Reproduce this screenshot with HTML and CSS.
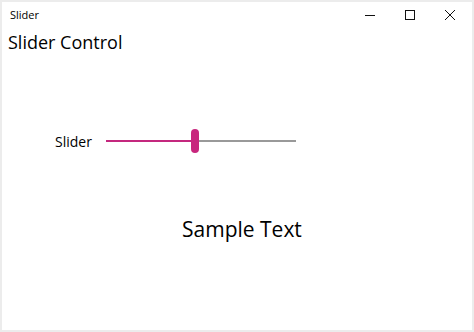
FILE: index.html
```html
<!DOCTYPE html>
<html lang="en">
<head>
    <meta charset="UTF-8">
    <title>Slider</title>
    <link rel="stylesheet" href="styles.css">
</head>
<body>
    <div class="window">
        <div class="titlebar">
            <span class="title">Slider</span>
            <div class="caption-buttons">
                <span class="caption-btn">
                    <svg width="10" height="10" viewBox="0 0 10 10"><path d="M0 5.5h10" stroke="#111" stroke-width="1"/></svg>
                </span>
                <span class="caption-btn">
                    <svg width="10" height="10" viewBox="0 0 10 10"><rect x="0.5" y="0.5" width="9" height="9" fill="none" stroke="#111" stroke-width="1"/></svg>
                </span>
                <span class="caption-btn">
                    <svg width="10" height="10" viewBox="0 0 10 10"><path d="M0 0L10 10M10 0L0 10" stroke="#111" stroke-width="1"/></svg>
                </span>
            </div>
        </div>

        <div class="content">
            <h1 class="heading">Slider Control</h1>

            <div class="slider-row">
                <span class="slider-label">Slider</span>
                <div class="slider">
                    <div class="track-fill"></div>
                    <div class="thumb"></div>
                    <div class="track-rest"></div>
                </div>
            </div>

            <div class="sample">Sample Text</div>
        </div>
    </div>
</body>
</html>
```

FILE: styles.css
```css
html, body {
    margin: 0;
    padding: 0;
}

body {
    width: 474px;
    height: 332px;
    background: #f0f0f0;
    font-family: "Segoe UI", "Open Sans", "Noto Sans", sans-serif;
    color: #000;
}

.window {
    box-sizing: border-box;
    width: 474px;
    height: 332px;
    border: 2px solid #ececec;
    background: #fff;
    display: flex;
    flex-direction: column;
}

.titlebar {
    height: 28px;
    display: flex;
    align-items: center;
    justify-content: space-between;
    padding-left: 8px;
    padding-right: 2px;
}

.title {
    font-size: 11px;
    margin-top: -3px;
}

.caption-buttons {
    display: flex;
    height: 100%;
}

.caption-btn {
    width: 40px;
    display: flex;
    align-items: center;
    justify-content: center;
    margin-top: -3px;
}

.content {
    flex: 1;
    display: flex;
    flex-direction: column;
}

.heading {
    margin: 0;
    padding-left: 6px;
    font-size: 18px;
    font-weight: normal;
    line-height: 24px;
}

.slider-row {
    display: flex;
    align-items: center;
    margin-top: 75px;
    padding-left: 53px;
}

.slider-label {
    font-size: 14px;
    width: 51px;
}

.slider {
    display: flex;
    align-items: center;
    height: 24px;
}

.track-fill {
    width: 85px;
    height: 2px;
    background: #c4287e;
}

.thumb {
    width: 8px;
    height: 24px;
    border-radius: 4px;
    background: #c8267d;
}

.track-rest {
    width: 97px;
    height: 2px;
    background: #999;
}

.sample {
    margin-top: 61px;
    padding-left: 180px;
    font-size: 21px;
    line-height: 30px;
}
```
